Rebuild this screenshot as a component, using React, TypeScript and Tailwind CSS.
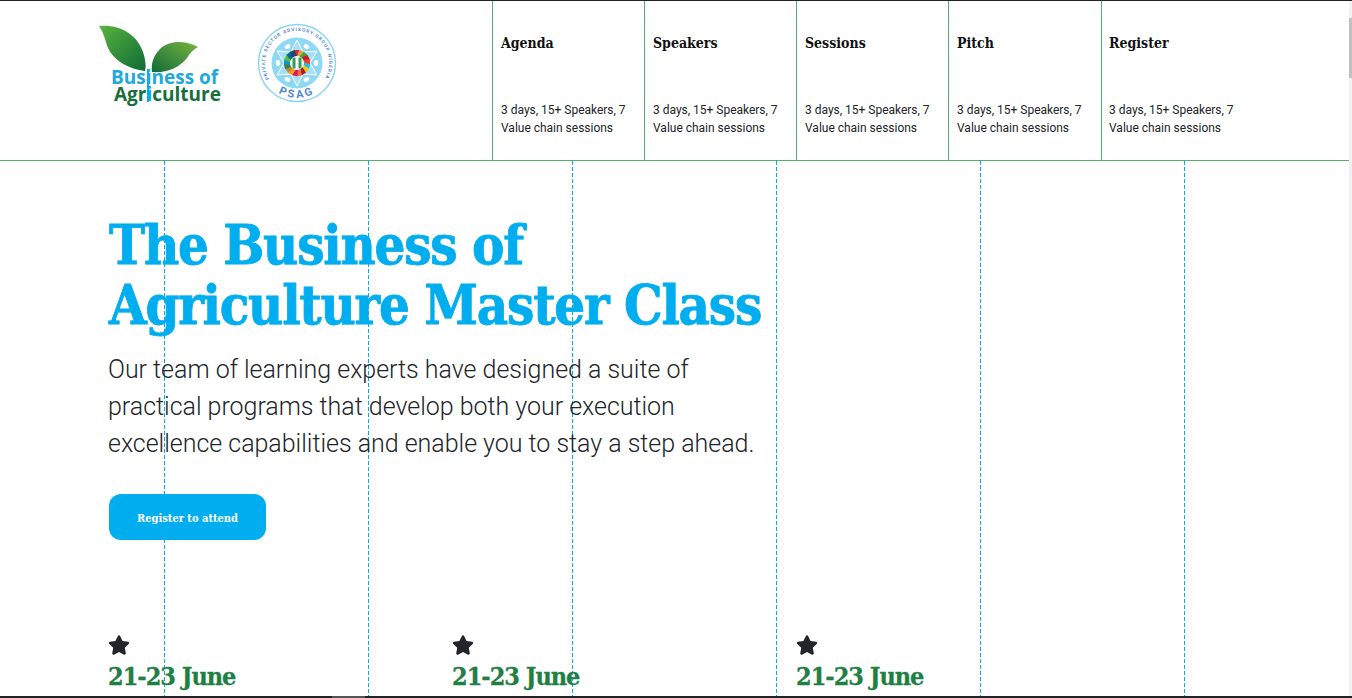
import { FaStar } from "react-icons/fa";

const navItems = ["Agenda", "Speakers", "Sessions", "Pitch", "Register"];
const guides = [164, 368, 572, 776, 980, 1184];
const slab = "font-['DejaVu_Serif_Condensed','DejaVu_Serif','Liberation_Serif',serif]";

function BoaLogo() {
  return (
    <div className="relative w-[124px] h-[84px]">
      <svg width="124" height="84" viewBox="0 0 124 84" className="absolute left-0 top-0">
        <defs>
          <linearGradient id="leafA" x1="0" y1="0" x2="1" y2="1">
            <stop offset="0" stopColor="#58b33d" />
            <stop offset="1" stopColor="#0f6b37" />
          </linearGradient>
          <linearGradient id="leafB" x1="1" y1="0" x2="0" y2="1">
            <stop offset="0" stopColor="#7ab440" />
            <stop offset="1" stopColor="#0f6b37" />
          </linearGradient>
        </defs>
        <path d="M0 1 C20 -1 38 9 44 27 C47 36 47 42 46 46 C30 44 15 36 9 23 C6 15 5 8 0 1Z" fill="url(#leafA)" />
        <path d="M99 22 C86 15 70 15 61 24 C54 31 52 39 53 47 C68 48 80 43 88 33 C91 28 94 25 99 22Z" fill="url(#leafB)" />
        <rect x="48" y="44" width="2" height="33" fill="#00aeef" />
      </svg>
      <div className="absolute left-[12px] top-[44px] font-['Open_Sans',sans-serif] font-bold text-[19px] leading-[17px] text-[#1ea8e0] whitespace-nowrap">
        Business of
      </div>
      <div className="absolute left-[15px] top-[61px] font-['Open_Sans',sans-serif] font-bold text-[19px] leading-[17px] text-[#17703b] whitespace-nowrap">
        Agr<span className="text-[#00aeef]">i</span>culture
      </div>
    </div>
  );
}

function PsagLogo() {
  const colors = ["#e5243b", "#dda63a", "#4c9f38", "#c5192d", "#ff3a21", "#26bde2", "#fcc30b", "#a21942", "#fd6925", "#dd1367", "#fd9d24", "#bf8b2e", "#3f7e44", "#0a97d9", "#56c02b", "#00689d", "#19486a"];
  return (
    <svg width="80" height="80" viewBox="0 0 80 80">
      <defs>
        <path id="psagArc" d="M12.3 56 A32 32 0 1 1 67.7 56" fill="none" />
        <path id="psagLabel" d="M9.7 57.5 A35 35 0 0 0 70.3 57.5" fill="none" />
      </defs>
      <circle cx="40" cy="40" r="38.5" fill="#fff" stroke="#8fd6f2" strokeWidth="1.5" />
      <circle cx="40" cy="40" r="25.5" fill="#8ed8f3" />
      <polygon points="40,17 46,29 60,28 53,40 60,52 46,51 40,63 34,51 20,52 27,40 20,28 34,29" fill="#a6e0f6" stroke="#fff" strokeWidth="1" />
      {[0, 60, 120, 180, 240, 300].map((a) => (
        <ellipse key={a} cx="40" cy="21" rx="3" ry="2.2" fill="#fff" transform={`rotate(${a + 30} 40 40)`} />
      ))}
      {colors.map((c, i) => (
        <rect key={c} x="37.5" y="27" width="5" height="6.5" fill={c} transform={`rotate(${(i * 360) / colors.length} 40 40)`} />
      ))}
      <circle cx="40" cy="40" r="7" fill="#fff" />
      <rect x="35.5" y="34.5" width="3" height="11" fill="#2f9e58" />
      <rect x="41.5" y="34.5" width="3" height="11" fill="#2f9e58" />
      <text fontFamily="Roboto, sans-serif" fontWeight="700" fontSize="4.8" fill="#5b8fd0">
        <textPath href="#psagArc" textLength="132">PRIVATE SECTOR ADVISORY GROUP NIGERIA</textPath>
      </text>
      <text fontFamily="Roboto, sans-serif" fontWeight="700" fontSize="11" letterSpacing="2.5" fill="#4f8ad0">
        <textPath href="#psagLabel" startOffset="17">PSAG</textPath>
      </text>
    </svg>
  );
}

export default function App() {
  return (
    <div className="relative w-[1352px] h-[698px] overflow-hidden bg-white font-['Roboto',sans-serif] text-[#212529]">
      {guides.map((x) => (
        <div
          key={x}
          className="absolute top-[161px] bottom-0 w-px bg-[repeating-linear-gradient(to_bottom,#00aeef_0,#00aeef_4px,transparent_4px,transparent_6px)]"
          style={{ left: x }}
        />
      ))}

      <div className="relative h-full pr-[3px] border-t border-t-[#222]">
        <header className="flex h-[160px] border-b border-b-[#5aab72]">
          <div className="w-[492px] flex items-start pl-[99px] pt-[24px] gap-[34px] shrink-0">
            <BoaLogo />
            <div className="-mt-[2px]">
              <PsagLogo />
            </div>
          </div>
          {navItems.map((item, i) => (
            <div
              key={item}
              className={`${i === 4 ? "flex-1 pl-[7px]" : i === 3 ? "w-[153px] pl-2" : "w-[152px] pl-2"} border-l border-l-[#5aab72] pt-[33px] flex flex-col`}
            >
              <div className={`${slab} font-bold text-[14px] leading-[18px] text-[#111]`}>{item}</div>
              <p className="mt-[49px] text-[12px] leading-[18px] tracking-[-0.01px] w-[130px] text-[#212529]">
                3 days, 15+ Speakers, 7 Value chain sessions
              </p>
            </div>
          ))}
        </header>

        <main className="pl-[108px]">
          <h1 className={`${slab} mt-[54px] pl-px font-bold text-[54px] leading-[60px] tracking-[-1.25px] text-[#00aeef] [-webkit-text-stroke:0.8px_#00aeef] whitespace-nowrap`}>
            The Business of
            <br />
            Agriculture Master Class
          </h1>
          <p className="mt-[16px] font-light text-[25px] leading-[37px] tracking-[-0.02px] text-[#212529] whitespace-nowrap">
            Our team of learning experts have designed a suite of
            <br />
            practical programs that develop both your execution
            <br />
            excellence capabilities and enable you to stay a step ahead.
          </p>
          <button className={`${slab} mt-[32px] ml-px pt-1 block w-[157px] h-[46px] rounded-[12px] bg-[#00aeef] text-white text-[11px] font-bold`}>
            Register to attend
          </button>
          <div className="mt-[94px] flex">
            {[0, 1, 2].map((i) => (
              <div key={i} className="w-[344px]">
                <FaStar className="block w-[22px] h-[22px] text-[#212529]" />
                <div className={`${slab} mt-[6px] font-bold text-[25px] leading-[30px] tracking-[-1px] text-[#1f7f45] [-webkit-text-stroke:0.3px_#1f7f45] whitespace-nowrap`}>
                  21-23 June
                </div>
              </div>
            ))}
          </div>
        </main>
      </div>

      {/* scrollbar */}
      <div className="absolute right-0 top-[1px] bottom-[2px] w-[3px] bg-[#f1f1f1]">
        <div className="mt-[17px] h-[60px] w-full bg-[#c1c1c1]" />
      </div>
      <div className="absolute left-0 right-0 bottom-0 h-[2px] bg-[#222]">
        <div className="ml-[332px] h-full w-[33px] bg-[#555]" />
      </div>
    </div>
  );
}
